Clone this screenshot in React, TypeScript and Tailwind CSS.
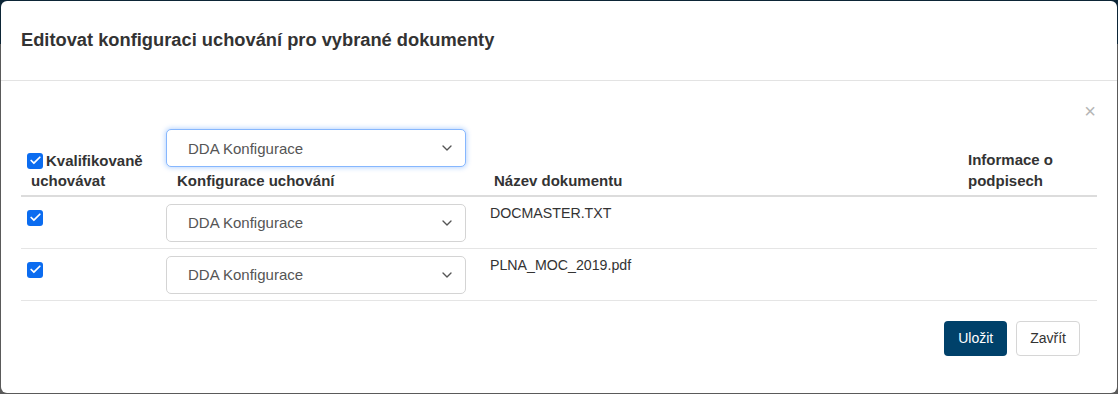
import { ChevronDown, Check } from "lucide-react";

const font = { fontFamily: '"Liberation Sans", Arial, sans-serif' };

function Box({ checked = true }: { checked?: boolean }) {
  return (
    <span className="inline-flex items-center justify-center w-4 h-4 rounded-[3px] bg-[#0b6cf0] shrink-0">
      {checked && <Check size={13} strokeWidth={3.2} className="text-white" />}
    </span>
  );
}

function Select({ focused = false }: { focused?: boolean }) {
  return (
    <div
      className={
        "flex items-center justify-between w-[300px] h-[38px] rounded-[5px] bg-white pl-[21px] pr-[10px] text-[15px] font-normal text-[#555] border " +
        (focused ? "border-[#86b7fe] shadow-[0_0_5px_1px_rgba(13,110,253,0.28)]" : "border-[#d4d4d4]")
      }
    >
      <span>DDA Konfigurace</span>
      <ChevronDown size={16} strokeWidth={2} className="text-[#555]" />
    </div>
  );
}

const rows = ["DOCMASTER.TXT", "PLNA_MOC_2019.pdf"];

export default function App() {
  return (
    <div className="relative w-[1118px] h-[394px] bg-[#5a5a5a] overflow-hidden" style={font}>
      <div className="h-[44px] bg-[#0c2536]" />
      <div className="absolute left-[1px] top-[1px] w-[1116px] h-[392px] bg-white rounded-[6px] flex flex-col">
        <div className="h-[80px] border-b border-[#e3e3e3] flex items-center px-5">
          <h2 className="text-[18.3px] font-semibold text-[#333] -mt-[1px]">
            Editovat konfiguraci uchování pro vybrané dokumenty
          </h2>
        </div>
        <div className="relative px-5 pt-[48px]">
          <span className="absolute right-[21px] top-[20px] text-[20px] leading-none text-[#b5b5b5]">×</span>
          <div className="flex items-end border-b-2 border-[#dcdcdc] pb-[4px] text-[15px] font-semibold text-[#333] leading-[21px]">
            <div className="w-[145px] pl-[10px]">
              <div className="flex items-center -ml-[4px] gap-[3px] -mb-[1px]">
                <Box />
                <span>Kvalifikovaně</span>
              </div>
              <div>uchovávat</div>
            </div>
            <div className="w-[325px]">
              <Select focused />
              <div className="pl-[11px] pt-[3px]">Konfigurace uchování</div>
            </div>
            <div className="w-[477px] pl-[3px]">Název dokumentu</div>
            <div className="flex-1">
              <div>Informace o</div>
              <div>podpisech</div>
            </div>
          </div>
          {rows.map((r) => (
            <div key={r} className="flex items-start h-[52px] border-b border-[#e5e5e5] pt-[7px] text-[14.2px] text-[#333]">
              <div className="w-[145px] pl-[6px] pt-[5px]">
                <Box />
              </div>
              <div className="w-[325px]">
                <Select />
              </div>
              <div className="-mt-[1px] -ml-[1px]">{r}</div>
            </div>
          ))}
          <div className="flex justify-end gap-[9px] pt-[20px] pr-[17px]">
            <button className="h-[35px] px-[14px] rounded-[4px] bg-[#00416a] text-white text-[14px]">Uložit</button>
            <button className="h-[35px] px-[13px] rounded-[4px] border border-[#d6d6d6] bg-white text-[#333] text-[14px]">
              Zavřít
            </button>
          </div>
        </div>
      </div>
    </div>
  );
}
